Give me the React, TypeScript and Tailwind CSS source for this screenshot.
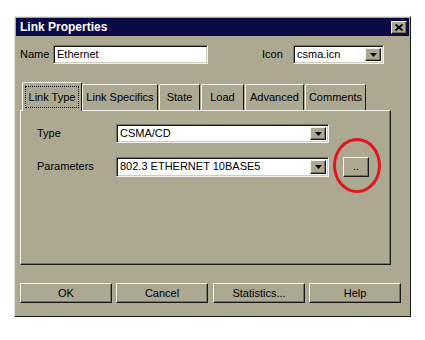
const FACE = 'bg-[#aca892]';

function Raised({ className = '', children }: { className?: string; children?: React.ReactNode }) {
  return (
    <div
      className={`${FACE} border border-t-[#f4f2ea] border-l-[#f4f2ea] border-r-[#1a1a1a] border-b-[#1a1a1a] shadow-[inset_-1px_-1px_0_#75725f] flex items-center justify-center ${className}`}
    >
      {children}
    </div>
  );
}

function ArrowButton() {
  return (
    <Raised className="w-[16px] h-full shrink-0">
      <svg width="7" height="4" viewBox="0 0 7 4">
        <path d="M0 0h7L3.5 4z" fill="#000" />
      </svg>
    </Raised>
  );
}

function Field({ value, width, height = 19, combo = false }: { value: string; width: number; height?: number; combo?: boolean }) {
  return (
    <div
      className="bg-white border border-t-[#75725f] border-l-[#75725f] border-r-[#f4f2ea] border-b-[#f4f2ea] shadow-[inset_1px_1px_0_#1a1a1a,inset_-1px_-1px_0_#cfccbd] flex items-stretch p-[2px] shrink-0"
      style={{ width, height }}
    >
      <div className="flex-1 flex items-center pl-[1px] text-black leading-none whitespace-nowrap overflow-hidden">{value}</div>
      {combo && <ArrowButton />}
    </div>
  );
}

function Tab({ label, width, active = false }: { label: string; width: number; active?: boolean }) {
  if (active) {
    return (
      <div
        className={`${FACE} relative z-10 -mb-[1px] h-[29px] px-[2px] pt-[3px] border-t border-l border-r border-t-[#f4f2ea] border-l-[#f4f2ea] border-r-[#1a1a1a] rounded-t-[2px] flex items-start shrink-0`}
        style={{ width }}
      >
        <div className="flex-1 border border-dotted border-black h-[22px] flex items-center justify-center">{label}</div>
      </div>
    );
  }
  return (
    <div
      className={`${FACE} h-[26px] border-t border-l border-r border-t-[#f4f2ea] border-l-[#f4f2ea] border-r-[#1a1a1a] rounded-t-[2px] flex items-center justify-center shrink-0 whitespace-nowrap`}
      style={{ width }}
    >
      {label}
    </div>
  );
}

export default function App() {
  return (
    <div
      className="w-[425px] h-[340px] bg-white pt-[16px] pl-[14px] text-[11px] text-black"
      style={{ fontFamily: '"Liberation Sans", Arial, sans-serif' }}
    >
      <div className={`${FACE} w-[397px] h-[301px] border border-t-[#e8e6dc] border-l-[#e8e6dc] border-r-[#1a1a1a] border-b-[#1a1a1a] p-[1px] flex flex-col`}>
        {/* title bar */}
        <div className="h-[18px] bg-[#0a0a44] flex items-center justify-between pl-[4px] pr-[2px]">
          <span className="text-white font-bold text-[12px] leading-none">Link Properties</span>
          <Raised className="w-[16px] h-[13px]">
            <svg width="8" height="7" viewBox="0 0 8 7">
              <path d="M0.5 0.5L7.5 6.5M7.5 0.5L0.5 6.5" stroke="#000" strokeWidth="1.8" />
            </svg>
          </Raised>
        </div>

        {/* name / icon row */}
        <div className="mt-[9px] flex items-center pl-[4px]">
          <span className="w-[33px]">Name</span>
          <Field value="Ethernet" width={155} />
          <span className="ml-[54px] w-[31px]">Icon</span>
          <Field value="csma.icn" width={91} combo />
        </div>

        {/* tabs */}
        <div className="mt-[18px] ml-[6px] flex items-end h-[28px]">
          <Tab label="Link Type" width={60} active />
          <Tab label="Link Specifics" width={76} />
          <div className="w-[1px]" />
          <Tab label="State" width={41} />
          <div className="w-[1px]" />
          <Tab label="Load" width={43} />
          <div className="w-[1px]" />
          <Tab label="Advanced" width={59} />
          <div className="w-[1px]" />
          <Tab label="Comments" width={61} />
        </div>

        {/* tab panel */}
        <div className="ml-[4px] w-[371px] h-[155px] border border-t-[#f4f2ea] border-l-[#f4f2ea] border-r-[#1a1a1a] border-b-[#1a1a1a] shadow-[inset_-1px_-1px_0_#75725f] pl-[16px] pt-[13px] flex flex-col gap-[13px]">
          <div className="flex items-center">
            <span className="w-[79px]">Type</span>
            <Field value="CSMA/CD" width={213} combo />
          </div>
          <div className="flex items-center">
            <span className="w-[79px]">Parameters</span>
            <Field value="802.3 ETHERNET 10BASE5" width={213} height={20} combo />
            <div className="relative ml-[14px] mt-[1px]">
              <Raised className="w-[26px] h-[20px] pb-[2px]">..</Raised>
              <div className="absolute left-[-10px] top-[-19px] w-[48px] h-[55px] rounded-[50%] border-[3px] border-[#e0161e]" />
            </div>
          </div>
        </div>

        {/* bottom buttons */}
        <div className="mt-[18px] ml-[4px] flex">
          <Raised className="w-[92px] h-[20px]">OK</Raised>
          <Raised className="w-[92px] h-[20px] ml-[4px]">Cancel</Raised>
          <Raised className="w-[92px] h-[20px] ml-[5px]">Statistics...</Raised>
          <Raised className="w-[92px] h-[20px] ml-[4px]">Help</Raised>
        </div>
      </div>
    </div>
  );
}
